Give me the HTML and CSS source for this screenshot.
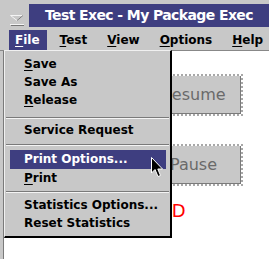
FILE: index.html
```html
<!DOCTYPE html>
<html lang="en">
<head>
  <meta charset="UTF-8">
  <title>Test Exec - My Package Exec</title>
  <link rel="stylesheet" href="styles.css">
</head>
<body>
  <div class="window">
    <div class="titlebar">
      <div class="sysmenu">
        <svg width="14" height="12" viewBox="0 0 14 12">
          <path d="M0.5 1.5 H13 L7 6.5 Z" fill="#c8c8c8" stroke="#f4f4f4" stroke-width="1"/>
          <path d="M13 1.5 L7 6.5" stroke="#777" stroke-width="1"/>
          <path d="M0 10.5 H14" stroke="#f4f4f4" stroke-width="1"/>
          <path d="M1 11.5 H14" stroke="#777" stroke-width="1"/>
        </svg>
      </div>
      <div class="title">Test Exec - My Package Exec</div>
    </div>

    <ul class="menubar">
      <li class="active"><u>F</u>ile</li>
      <li><u>T</u>est</li>
      <li><u>V</u>iew</li>
      <li><u>O</u>ptions</li>
      <li><u>H</u>elp</li>
    </ul>

    <div class="content">
      <div class="frame"><button class="btn" disabled>Resume</button></div>
      <div class="frame last"><button class="btn" disabled>Pause</button></div>
      <div class="status">STOPPED</div>
    </div>

    <!-- File menu, pulled down -->
    <ul class="dropdown">
      <li><u>S</u>ave</li>
      <li>Save As</li>
      <li><u>R</u>elease</li>
      <li class="sep first"></li>
      <li>Service Request</li>
      <li class="sep"></li>
      <li class="armed">Print Options...</li>
      <li><u>P</u>rint</li>
      <li class="sep third"></li>
      <li>Statistics Options...</li>
      <li>Reset Statistics</li>
    </ul>

    <svg class="cursor" width="13" height="21" viewBox="0 0 13 21">
      <path d="M0.5 0.5 V16 L4 12.5 L7 19.5 L9.5 18.5 L6.8 12 H11.5 Z" fill="#000" stroke="#fff" stroke-width="1"/>
    </svg>
  </div>
</body>
</html>
```

FILE: styles.css
```css
body {
  margin: 0;
  background: #fff;
  font-family: "DejaVu Sans", sans-serif;
}

.window {
  position: relative;
  width: 269px;
  height: 259px;
  overflow: hidden;
  background: #c8c8c8;
}

.titlebar {
  display: flex;
  height: 28px;
}

.sysmenu {
  width: 29px;
  padding: 11px 0 0 10px;
  box-sizing: border-box;
}

.title {
  flex: 1;
  margin-top: 4px;
  height: 23px;
  background: #3e3e80;
  color: #fff;
  font-weight: bold;
  font-size: 14px;
  letter-spacing: -0.6px;
  line-height: 23px;
  padding-left: 16px;
}

.menubar {
  list-style: none;
  margin: 0;
  padding: 2px 0 0 9px;
  height: 20px;
  display: flex;
  border-bottom: 1px solid #888;
  font-size: 12px;
  font-weight: bold;
}

.menubar li {
  padding: 0 7px 0 6px;
  margin-right: 7px;
  line-height: 20px;
  height: 20px;
}

.menubar li.active {
  background: #3e3e80;
  color: #fff;
}

u {
  text-underline-offset: 2px;
  text-decoration-thickness: 1px;
}

.content {
  background: #fff;
  height: 208px;
  border-left: 3px solid #c8c8c8;
  box-shadow: inset 1px 0 #7a7a7a;
  padding: 23px 0 0 142px;
  display: flex;
  flex-direction: column;
  align-items: flex-start;
}

.frame {
  border: 2px dotted #a8a8a8;
  margin-bottom: 28px;
}

.frame.last {
  margin-bottom: 14px;
}

.btn {
  display: block;
  width: 94px;
  height: 38px;
  background: #c8c8c8;
  border: none;
  border-right: 1px solid #7a7a7a;
  border-bottom: 1px solid #7a7a7a;
  font-family: "DejaVu Sans", sans-serif;
  font-size: 16px;
  color: #6a6a6a;
  padding: 0;
}

.status {
  color: #f00;
  font-size: 18px;
  margin-left: -43px;
  white-space: nowrap;
}

.dropdown {
  position: absolute;
  left: 4px;
  top: 50px;
  width: 168px;
  height: 188px;
  box-sizing: border-box;
  margin: 0;
  padding: 4px 4px 0 5px;
  list-style: none;
  background: #c8c8c8;
  border-top: 1px solid #f0f0f0;
  border-left: 1px solid #f0f0f0;
  border-right: 2px solid #000;
  border-bottom: 2px solid #000;
  font-size: 12px;
  font-weight: bold;
}

.dropdown li {
  height: 18px;
  line-height: 18px;
  padding-left: 14px;
  white-space: nowrap;
}

.dropdown li.armed {
  background: #3e3e80;
  color: #fff;
  height: 19px;
  line-height: 19px;
}

.dropdown li.sep {
  height: 0;
  margin: 5px -3px 4px -4px;
  border-top: 1px solid #7a7a7a;
  border-bottom: 1px solid #f4f4f4;
  padding: 0;
}

.dropdown li.sep.first {
  margin-top: 8px;
  margin-bottom: 2px;
}

.dropdown li.sep.third {
  margin-top: 4px;
  margin-bottom: 3px;
}

.cursor {
  position: absolute;
  left: 151px;
  top: 157px;
}
```
